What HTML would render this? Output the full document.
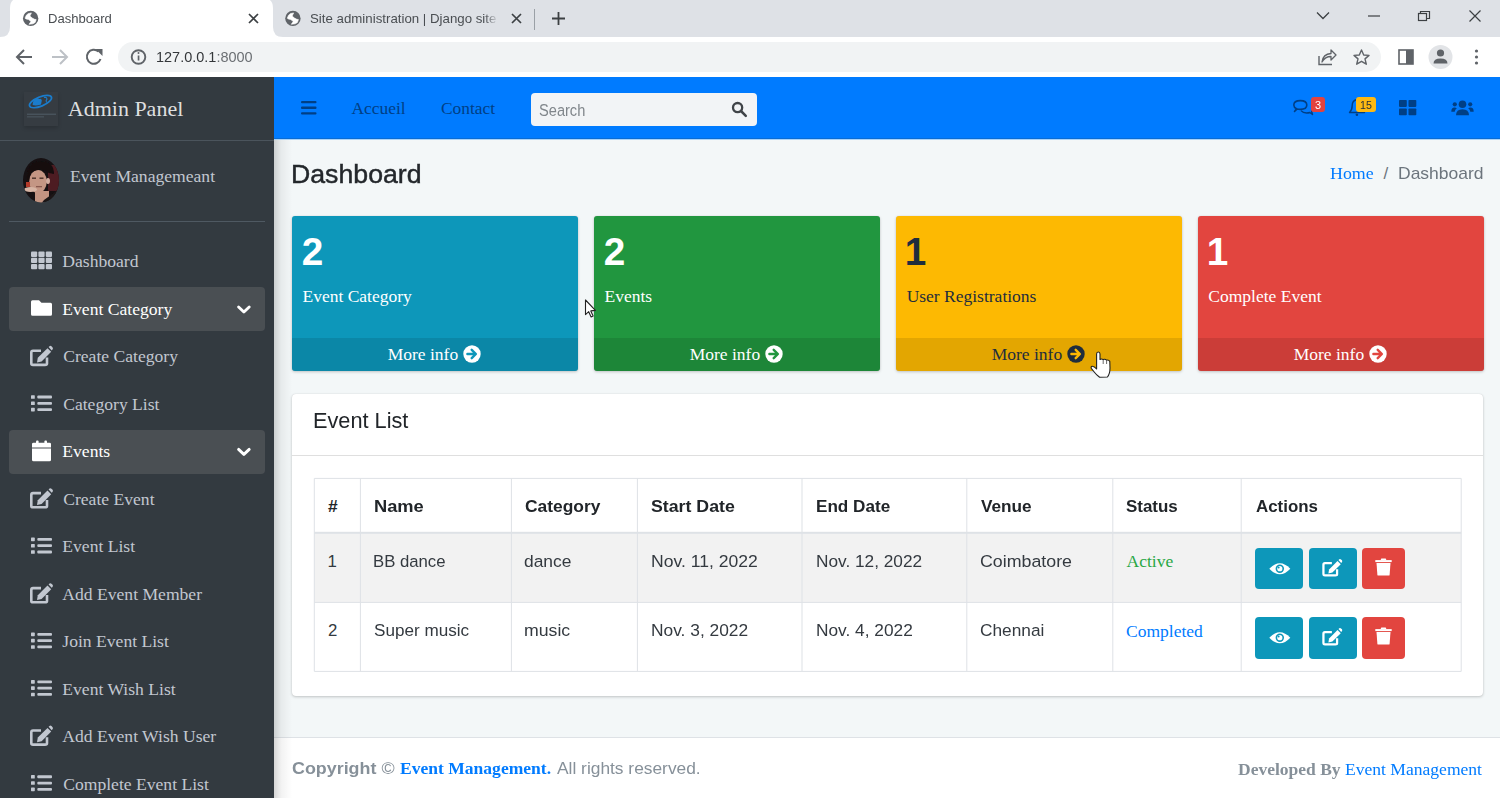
<!DOCTYPE html>
<html><head><meta charset="utf-8">
<style>
*{box-sizing:border-box;margin:0;padding:0}
html,body{width:1500px;height:798px;overflow:hidden;background:#fff;font-family:'Liberation Sans',sans-serif}
.t{position:absolute;white-space:nowrap;line-height:1}
.r{position:absolute;display:block}
</style></head><body>
<div class="r" style="left:0px;top:0px;width:1500px;height:37px;background:#dee1e6"></div>
<div class="r" style="left:0px;top:37px;width:1500px;height:41px;background:#fff"></div>
<svg class="r" style="left:0px;top:0px;" width="300" height="37" viewBox="0 0 300 37"><path d="M0,37 Q10,37 10,27 L10,8 Q10,-2 20,-2 L263,-2 Q273,-2 273,8 L273,27 Q273,37 283,37 Z" fill="#fff"/></svg>
<svg class="r" style="left:0px;top:0px;" width="60" height="37" viewBox="0 0 60 37"><circle cx="30.65" cy="18.4" r="7.7" fill="#5f6368"/><path d="M25.00,18.20 L26.30,15.20 L28.30,13.60 L31.40,12.90 L29.90,16.10 L32.20,18.00 L34.60,19.30 L36.20,19.60 L35.20,22.40 L33.00,23.80 L29.00,24.30 L31.00,21.60 L28.60,19.60 L26.20,19.00Z" fill="#fff" stroke="#fff" stroke-width=".6" stroke-linejoin="round"/></svg>
<svg class="r" style="left:260px;top:0px;" width="60" height="37" viewBox="260 0 60 37"><circle cx="292.9" cy="18.4" r="7.7" fill="#5f6368"/><path d="M287.25,18.20 L288.55,15.20 L290.55,13.60 L293.65,12.90 L292.15,16.10 L294.45,18.00 L296.85,19.30 L298.45,19.60 L297.45,22.40 L295.25,23.80 L291.25,24.30 L293.25,21.60 L290.85,19.60 L288.45,19.00Z" fill="#fff" stroke="#fff" stroke-width=".6" stroke-linejoin="round"/></svg>
<div class="t" style="left:47.95px;top:11.85px;font-size:13.4px;font-family:'Liberation Sans',sans-serif;color:#4a4e52;transform:scaleX(0.9751);transform-origin:0 0;">Dashboard</div>
<div class="t" style="left:310.40px;top:11.65px;font-size:13.4px;font-family:'Liberation Sans',sans-serif;color:#4a4e52;transform:scaleX(0.9910);transform-origin:0 0;width:200px;height:20px;-webkit-mask-image:linear-gradient(90deg,#000 176px,transparent 190px)">Site administration | Django site a</div>
<svg class="r" style="left:0px;top:0px;" width="1500" height="37" viewBox="0 0 1500 37"><path d="M249.0,14.0 L258.0,23.0 M258.0,14.0 L249.0,23.0" stroke="#3c4043" stroke-width="1.7" fill="none"/><path d="M512.0,14.0 L521.0,23.0 M521.0,14.0 L512.0,23.0" stroke="#3c4043" stroke-width="1.7" fill="none"/><path d="M534.5,9 L534.5,30" stroke="#9aa0a6" stroke-width="1"/><path d="M552,18.5 L565,18.5 M558.5,12 L558.5,25" stroke="#3c4043" stroke-width="1.8"/><path d="M1317,12.5 L1323,18.5 L1329,12.5" stroke="#3c4043" stroke-width="1.3" fill="none"/><path d="M1368,16 L1380,16" stroke="#3c4043" stroke-width="1.2"/><rect x="1418.5" y="13.5" width="8" height="7" stroke="#3c4043" stroke-width="1.2" fill="none"/><path d="M1420.5,13.5 L1420.5,11.5 L1429.5,11.5 L1429.5,18.5 L1426.5,18.5" stroke="#3c4043" stroke-width="1.2" fill="none"/><path d="M1469.5,10.5 L1480.5,21.5 M1480.5,10.5 L1469.5,21.5" stroke="#3c4043" stroke-width="1.2" fill="none"/></svg>
<div class="r" style="left:118px;top:42px;width:1263px;height:30px;background:#f1f3f4;border-radius:15px"></div>
<svg class="r" style="left:0px;top:37px;" width="1500" height="41" viewBox="0 37 1500 41"><path d="M32,57 L17.5,57 M24,50 L17,57 L24,64" stroke="#5f6368" stroke-width="2" fill="none"/><path d="M52,57 L66.5,57 M60,50 L67,57 L60,64" stroke="#bdc1c6" stroke-width="2" fill="none"/><path d="M100.5,59 A7,7 0 1 1 98.5,51.5" stroke="#5f6368" stroke-width="2" fill="none"/><path d="M95.5,49 L102.5,49 L102.5,56 Z" fill="#5f6368"/><circle cx="138.5" cy="57" r="6.8" stroke="#5f6368" stroke-width="1.9" fill="none"/><rect x="137.7" y="55.5" width="1.7" height="5" fill="#5f6368"/><circle cx="138.5" cy="53" r="1" fill="#5f6368"/><path d="M1319,56 L1319,64.5 L1332,64.5" stroke="#5f6368" stroke-width="1.4" fill="none"/><path d="M1322,62 Q1323,54 1331,53.5 L1331,50 L1336,55 L1331,60 L1331,56.5 Q1325,56.5 1322,62 Z" stroke="#5f6368" stroke-width="1.3" fill="none" stroke-linejoin="round"/><path d="M1361.5,50 L1363.7,55 L1369,55.4 L1365,58.9 L1366.3,64.2 L1361.5,61.3 L1356.7,64.2 L1358,58.9 L1354,55.4 L1359.3,55 Z" stroke="#5f6368" stroke-width="1.4" fill="none" stroke-linejoin="round"/><rect x="1399" y="50" width="14" height="14" stroke="#5f6368" stroke-width="1.6" fill="none"/><rect x="1406" y="50" width="7" height="14" fill="#5f6368"/><circle cx="1440.5" cy="57" r="12" fill="#e2e4e7"/><circle cx="1440.5" cy="53" r="3.6" fill="#5f6368"/><path d="M1433.5,63.5 Q1433.5,58.5 1440.5,58.5 Q1447.5,58.5 1447.5,63.5 Z" fill="#5f6368"/><circle cx="1476.5" cy="51" r="1.6" fill="#5f6368"/><circle cx="1476.5" cy="57" r="1.6" fill="#5f6368"/><circle cx="1476.5" cy="63" r="1.6" fill="#5f6368"/></svg>
<div class="t" style="left:155.91px;top:50.44px;font-size:14.6px;font-family:'Liberation Sans',sans-serif;color:#34373a;transform:scaleX(0.9919);transform-origin:0 0;">127.0.0.1<span style="color:#6b6f73">:8000</span></div>
<div class="r" style="left:0px;top:77px;width:1500px;height:721px;background:#f3f7f8"></div>
<div class="r" style="left:274px;top:736.5px;width:1226px;height:62px;background:#fff;border-top:1px solid #dee2e6"></div>
<div class="r" style="left:274px;top:77px;width:18px;height:721px;background:linear-gradient(90deg,rgba(0,0,0,.16),rgba(0,0,0,.05) 40%,rgba(0,0,0,0))"></div>
<div class="r" style="left:274px;top:77px;width:1226px;height:62px;background:#007bff"></div>
<div class="r" style="left:274px;top:138px;width:1226px;height:1px;background:#0a6cd4"></div>
<div class="r" style="left:274px;top:139px;width:1226px;height:1px;background:#a8d2f8"></div>
<div class="r" style="left:0px;top:77px;width:274px;height:721px;background:#333a40"></div>
<div class="r" style="left:24px;top:92px;width:34px;height:34px;background:#363c42;box-shadow:0 2px 4px rgba(0,0,0,.18)"></div>
<svg class="r" style="left:18px;top:86px;" width="46" height="46" viewBox="18 86 46 46"><ellipse cx="40.5" cy="101.6" rx="11.8" ry="4.6" fill="none" stroke="#1a7ccc" stroke-width="1.7" transform="rotate(-22 40.5 101.6)"/><path d="M32.6,105 Q32.8,99.5 36,98.8 Q37.5,97.6 39.3,99 Q41.5,98.2 41.8,100.5 L41,104.5 Q36,106 32.6,105 Z" fill="#1a7ccc"/><path d="M44,97.5 Q46.5,96.8 47,99 Q45.5,100.5 46.5,102.5" stroke="#1a7ccc" stroke-width="1.1" fill="none"/><rect x="27" y="113.6" width="29" height="1.3" fill="#4b5660"/><rect x="27" y="116.3" width="17" height="1.1" fill="#4b5660"/></svg>
<div class="t" style="left:67.78px;top:98.18px;font-size:22px;font-family:'Liberation Serif',serif;color:rgba(255,255,255,.85);">Admin Panel</div>
<div class="r" style="left:0px;top:139.5px;width:274px;height:1px;background:#4b545c"></div>
<svg class="r" style="left:23.3px;top:158.3px;" width="36" height="44.4" viewBox="0 0 36 44.4"><defs><clipPath id="av"><ellipse cx="18" cy="22.2" rx="18" ry="22.2"/></clipPath><filter id="bl"><feGaussianBlur stdDeviation=".6"/></filter></defs><g clip-path="url(#av)"><rect width="36" height="44.4" fill="#161012"/><g filter="url(#bl)"><rect x="25" y="7" width="11" height="26" fill="#4d1b20"/><ellipse cx="15" cy="23.5" rx="8.8" ry="11.5" fill="#c49684"/><path d="M4,22 Q3,4 17,3 Q31,3 31,16 L26,15 Q19,9 9,14 Q6,18 6,24 Z" fill="#140e10"/><rect x="9" y="19.5" width="4" height="1.4" fill="#4a3028"/><rect x="16.5" y="19.5" width="4" height="1.4" fill="#4a3028"/><rect x="13" y="28" width="6" height="1.3" fill="#8a5a50"/><rect x="12" y="33" width="14" height="12" fill="#c39482"/><path d="M19,44.4 L36,44.4 L36,31 Q28,37 21,42 Z" fill="#1b1719"/><ellipse cx="7.5" cy="31.5" rx="6.5" ry="2.6" fill="#d6b4a4"/><ellipse cx="25" cy="23" rx="2" ry="3" fill="#d2ada0"/><rect x="3" y="24" width="4" height="5" fill="#b33a2a"/></g></g></svg>
<div class="t" style="left:69.97px;top:167.66px;font-size:17.6px;font-family:'Liberation Serif',serif;color:#c2c7d0;">Event Managemeant</div>
<div class="r" style="left:9px;top:221px;width:256px;height:1px;background:#4f5962"></div>
<div class="t" style="left:62.30px;top:253.36px;font-size:17.6px;font-family:'Liberation Serif',serif;color:#c2c7d0;">Dashboard</div>
<div class="r" style="left:9px;top:287px;width:256px;height:44px;background:#4a4f53;border-radius:4px"></div>
<div class="t" style="left:62.30px;top:300.83px;font-size:17.6px;font-family:'Liberation Serif',serif;color:#fff;">Event Category</div>
<div class="t" style="left:63.20px;top:348.30px;font-size:17.6px;font-family:'Liberation Serif',serif;color:#c2c7d0;">Create Category</div>
<div class="t" style="left:63.20px;top:395.77px;font-size:17.6px;font-family:'Liberation Serif',serif;color:#c2c7d0;">Category List</div>
<div class="r" style="left:9px;top:429.9px;width:256px;height:44px;background:#4a4f53;border-radius:4px"></div>
<div class="t" style="left:62.30px;top:443.24px;font-size:17.6px;font-family:'Liberation Serif',serif;color:#fff;">Events</div>
<div class="t" style="left:63.20px;top:490.71px;font-size:17.6px;font-family:'Liberation Serif',serif;color:#c2c7d0;">Create Event</div>
<div class="t" style="left:62.30px;top:538.18px;font-size:17.6px;font-family:'Liberation Serif',serif;color:#c2c7d0;">Event List</div>
<div class="t" style="left:62.30px;top:585.65px;font-size:17.6px;font-family:'Liberation Serif',serif;color:#c2c7d0;">Add Event Member</div>
<div class="t" style="left:62.30px;top:633.12px;font-size:17.6px;font-family:'Liberation Serif',serif;color:#c2c7d0;">Join Event List</div>
<div class="t" style="left:62.30px;top:680.59px;font-size:17.6px;font-family:'Liberation Serif',serif;color:#c2c7d0;">Event Wish List</div>
<div class="t" style="left:62.30px;top:728.06px;font-size:17.6px;font-family:'Liberation Serif',serif;color:#c2c7d0;">Add Event Wish User</div>
<div class="t" style="left:63.20px;top:775.53px;font-size:17.6px;font-family:'Liberation Serif',serif;color:#c2c7d0;">Complete Event List</div>
<svg class="r" style="left:0px;top:77px;" width="274" height="721" viewBox="0 77 274 721"><rect x="31.0" y="251.60000000000002" width="6.2" height="5.3" rx="1" fill="#c2c7d0"/><rect x="31.0" y="257.8" width="6.2" height="5.3" rx="1" fill="#c2c7d0"/><rect x="31.0" y="264.0" width="6.2" height="5.3" rx="1" fill="#c2c7d0"/><rect x="38.4" y="251.60000000000002" width="6.2" height="5.3" rx="1" fill="#c2c7d0"/><rect x="38.4" y="257.8" width="6.2" height="5.3" rx="1" fill="#c2c7d0"/><rect x="38.4" y="264.0" width="6.2" height="5.3" rx="1" fill="#c2c7d0"/><rect x="45.8" y="251.60000000000002" width="6.2" height="5.3" rx="1" fill="#c2c7d0"/><rect x="45.8" y="257.8" width="6.2" height="5.3" rx="1" fill="#c2c7d0"/><rect x="45.8" y="264.0" width="6.2" height="5.3" rx="1" fill="#c2c7d0"/><path d="M238.6,306.97 L243.9,311.97 L249.2,306.97" stroke="#fff" stroke-width="2.9" fill="none" stroke-linecap="round" stroke-linejoin="round"/><path d="M31,301.6700000000001 Q31,300.1700000000001 32.5,300.1700000000001 L39,300.1700000000001 L41.5,302.6700000000001 L50.5,302.6700000000001 Q52,302.6700000000001 52,304.1700000000001 L52,314.1700000000001 Q52,315.6700000000001 50.5,315.6700000000001 L32.5,315.6700000000001 Q31,315.6700000000001 31,314.1700000000001 Z" fill="#fff"/><path d="M41,350.74 L33,350.74 Q31.3,350.74 31.3,352.54 L31.3,363.54 Q31.3,364.84000000000003 33,364.84000000000003 L45,364.84000000000003 Q47,364.84000000000003 47,363.54 L47,357.54" stroke="#c2c7d0" stroke-width="2.6" fill="none"/><path d="M37,362.54 L37.8,357.84000000000003 L47.5,348.14000000000004 L51.2,351.84000000000003 L41.6,361.54 Z" fill="#c2c7d0"/><path d="M48.6,347.04 L49.5,346.14000000000004 Q50.5,345.34000000000003 51.5,346.34000000000003 L52.6,347.44 Q53.4,348.54 52.5,349.54 L51.7,350.44 Z" fill="#c2c7d0"/><rect x="31" y="395.21" width="3.8" height="3.6" rx=".6" fill="#c2c7d0"/><rect x="37.3" y="395.60999999999996" width="14.7" height="2.8" rx="1" fill="#c2c7d0"/><rect x="31" y="401.51" width="3.8" height="3.6" rx=".6" fill="#c2c7d0"/><rect x="37.3" y="401.90999999999997" width="14.7" height="2.8" rx="1" fill="#c2c7d0"/><rect x="31" y="407.81" width="3.8" height="3.6" rx=".6" fill="#c2c7d0"/><rect x="37.3" y="408.21" width="14.7" height="2.8" rx="1" fill="#c2c7d0"/><path d="M238.6,449.38 L243.9,454.38 L249.2,449.38" stroke="#fff" stroke-width="2.9" fill="none" stroke-linecap="round" stroke-linejoin="round"/><path d="M32,443.98 Q32,442.68 33.5,442.68 L49.5,442.68 Q51,442.68 51,443.98 L51,447.48 L32,447.48 Z" fill="#fff"/><rect x="36" y="440.48" width="2.6" height="4" rx="1" fill="#fff"/><rect x="44.4" y="440.48" width="2.6" height="4" rx="1" fill="#fff"/><path d="M32,448.48 L51,448.48 L51,459.78000000000003 Q51,461.28000000000003 49.5,461.28000000000003 L33.5,461.28000000000003 Q32,461.28000000000003 32,459.78000000000003 Z" fill="#fff"/><path d="M41,493.15000000000003 L33,493.15000000000003 Q31.3,493.15000000000003 31.3,494.95000000000005 L31.3,505.95000000000005 Q31.3,507.25000000000006 33,507.25000000000006 L45,507.25000000000006 Q47,507.25000000000006 47,505.95000000000005 L47,499.95000000000005" stroke="#c2c7d0" stroke-width="2.6" fill="none"/><path d="M37,504.95000000000005 L37.8,500.25000000000006 L47.5,490.55000000000007 L51.2,494.25000000000006 L41.6,503.95000000000005 Z" fill="#c2c7d0"/><path d="M48.6,489.45000000000005 L49.5,488.55000000000007 Q50.5,487.75000000000006 51.5,488.75000000000006 L52.6,489.85 Q53.4,490.95000000000005 52.5,491.95000000000005 L51.7,492.85 Z" fill="#c2c7d0"/><rect x="31" y="537.6200000000001" width="3.8" height="3.6" rx=".6" fill="#c2c7d0"/><rect x="37.3" y="538.0200000000001" width="14.7" height="2.8" rx="1" fill="#c2c7d0"/><rect x="31" y="543.9200000000001" width="3.8" height="3.6" rx=".6" fill="#c2c7d0"/><rect x="37.3" y="544.32" width="14.7" height="2.8" rx="1" fill="#c2c7d0"/><rect x="31" y="550.2200000000001" width="3.8" height="3.6" rx=".6" fill="#c2c7d0"/><rect x="37.3" y="550.6200000000001" width="14.7" height="2.8" rx="1" fill="#c2c7d0"/><path d="M41,588.09 L33,588.09 Q31.3,588.09 31.3,589.89 L31.3,600.89 Q31.3,602.1899999999999 33,602.1899999999999 L45,602.1899999999999 Q47,602.1899999999999 47,600.89 L47,594.89" stroke="#c2c7d0" stroke-width="2.6" fill="none"/><path d="M37,599.89 L37.8,595.1899999999999 L47.5,585.49 L51.2,589.1899999999999 L41.6,598.89 Z" fill="#c2c7d0"/><path d="M48.6,584.39 L49.5,583.49 Q50.5,582.6899999999999 51.5,583.6899999999999 L52.6,584.79 Q53.4,585.89 52.5,586.89 L51.7,587.79 Z" fill="#c2c7d0"/><rect x="31" y="632.5600000000001" width="3.8" height="3.6" rx=".6" fill="#c2c7d0"/><rect x="37.3" y="632.96" width="14.7" height="2.8" rx="1" fill="#c2c7d0"/><rect x="31" y="638.86" width="3.8" height="3.6" rx=".6" fill="#c2c7d0"/><rect x="37.3" y="639.26" width="14.7" height="2.8" rx="1" fill="#c2c7d0"/><rect x="31" y="645.1600000000001" width="3.8" height="3.6" rx=".6" fill="#c2c7d0"/><rect x="37.3" y="645.5600000000001" width="14.7" height="2.8" rx="1" fill="#c2c7d0"/><rect x="31" y="680.0300000000001" width="3.8" height="3.6" rx=".6" fill="#c2c7d0"/><rect x="37.3" y="680.4300000000001" width="14.7" height="2.8" rx="1" fill="#c2c7d0"/><rect x="31" y="686.33" width="3.8" height="3.6" rx=".6" fill="#c2c7d0"/><rect x="37.3" y="686.73" width="14.7" height="2.8" rx="1" fill="#c2c7d0"/><rect x="31" y="692.6300000000001" width="3.8" height="3.6" rx=".6" fill="#c2c7d0"/><rect x="37.3" y="693.0300000000001" width="14.7" height="2.8" rx="1" fill="#c2c7d0"/><path d="M41,730.5 L33,730.5 Q31.3,730.5 31.3,732.3 L31.3,743.3 Q31.3,744.5999999999999 33,744.5999999999999 L45,744.5999999999999 Q47,744.5999999999999 47,743.3 L47,737.3" stroke="#c2c7d0" stroke-width="2.6" fill="none"/><path d="M37,742.3 L37.8,737.5999999999999 L47.5,727.9 L51.2,731.5999999999999 L41.6,741.3 Z" fill="#c2c7d0"/><path d="M48.6,726.8 L49.5,725.9 Q50.5,725.0999999999999 51.5,726.0999999999999 L52.6,727.1999999999999 Q53.4,728.3 52.5,729.3 L51.7,730.1999999999999 Z" fill="#c2c7d0"/><rect x="31" y="774.97" width="3.8" height="3.6" rx=".6" fill="#c2c7d0"/><rect x="37.3" y="775.37" width="14.7" height="2.8" rx="1" fill="#c2c7d0"/><rect x="31" y="781.27" width="3.8" height="3.6" rx=".6" fill="#c2c7d0"/><rect x="37.3" y="781.67" width="14.7" height="2.8" rx="1" fill="#c2c7d0"/><rect x="31" y="787.57" width="3.8" height="3.6" rx=".6" fill="#c2c7d0"/><rect x="37.3" y="787.97" width="14.7" height="2.8" rx="1" fill="#c2c7d0"/></svg>
<svg class="r" style="left:274px;top:77px;" width="1226" height="62" viewBox="274 77 1226 62"><rect x="301" y="101" width="15.5" height="2.3" rx="1" fill="#003f85"/><rect x="301" y="106.6" width="15.5" height="2.3" rx="1" fill="#003f85"/><rect x="301" y="112.3" width="15.5" height="2.3" rx="1" fill="#003f85"/><path d="M1294.5,111.5 L1296.5,108.8 Q1293.8,107.3 1293.8,105 Q1293.8,100.6 1300.3,100.6 Q1306.8,100.6 1306.8,105 Q1306.8,109.4 1300.3,109.4 Q1298.5,109.4 1297.2,109 Z" stroke="#003f85" stroke-width="1.6" fill="none" stroke-linejoin="round"/><path d="M1301,110.6 Q1303,113 1306.5,113 Q1308.5,113 1309.8,112.5 L1312.5,114.5 L1311.6,111.3 Q1313,109.8 1312.6,107" stroke="#003f85" stroke-width="1.4" fill="none" stroke-linejoin="round"/><path d="M1349.5,112.5 L1364.5,112.5 Q1361.8,110 1361.8,105.5 Q1361.8,100.5 1357,99.5 Q1352.2,100.5 1352.2,105.5 Q1352.2,110 1349.5,112.5 Z" stroke="#003f85" stroke-width="1.4" fill="none" stroke-linejoin="round"/><circle cx="1356.9" cy="114.8" r="1.3" fill="#003f85"/><rect x="1399" y="100" width="7.8" height="6.9" rx=".8" fill="#003f85"/><rect x="1408.5" y="100" width="7.8" height="6.9" rx=".8" fill="#003f85"/><rect x="1399" y="108.4" width="7.8" height="6.9" rx=".8" fill="#003f85"/><rect x="1408.5" y="108.4" width="7.8" height="6.9" rx=".8" fill="#003f85"/><circle cx="1462.5" cy="104.3" r="3.8" fill="#003f85"/><path d="M1456,115.3 Q1456,109.2 1462.5,109.2 Q1469,109.2 1469,115.3 Z" fill="#003f85"/><circle cx="1454.8" cy="104.3" r="2.1" fill="#003f85"/><circle cx="1470.2" cy="104.3" r="2.1" fill="#003f85"/><path d="M1451.3,111.8 Q1451.3,107.6 1454.5,107.6 Q1456,107.6 1456.8,108.3 Q1455,109.6 1454.7,111.8 Z" fill="#003f85"/><path d="M1473.7,111.8 Q1473.7,107.6 1470.5,107.6 Q1469,107.6 1468.2,108.3 Q1470,109.6 1470.3,111.8 Z" fill="#003f85"/></svg>
<div class="t" style="left:351.53px;top:99.63px;font-size:17.4px;font-family:'Liberation Serif',serif;color:#003f85;">Accueil</div>
<div class="t" style="left:441.00px;top:99.63px;font-size:17.4px;font-family:'Liberation Serif',serif;color:#003f85;">Contact</div>
<div class="r" style="left:531.3px;top:92.5px;width:225.4px;height:33.8px;background:#f2f4f6;border-radius:4px"></div>
<div class="t" style="left:539.34px;top:101.70px;font-size:16.3px;font-family:'Liberation Sans',sans-serif;color:#80868b;transform:scaleX(0.8977);transform-origin:0 0;">Search</div>
<svg class="r" style="left:725px;top:95px;" width="30" height="30" viewBox="725 95 30 30"><circle cx="737.6" cy="107.6" r="4.6" stroke="#404448" stroke-width="2.3" fill="none"/><path d="M741,111 L745.8,115.8" stroke="#404448" stroke-width="2.5" stroke-linecap="round"/></svg>
<div class="r" style="left:1311.3px;top:97px;width:14px;height:14.7px;background:#e2433f;border-radius:3px"></div>
<div class="t" style="left:1315.16px;top:99.51px;font-size:10.5px;font-family:'Liberation Sans',sans-serif;color:#fff;transform:scaleX(1.0426);transform-origin:0 0;">3</div>
<div class="r" style="left:1356px;top:96.7px;width:20px;height:15.3px;background:#fdb913;border-radius:3px"></div>
<div class="t" style="left:1359.80px;top:99.51px;font-size:10.5px;font-family:'Liberation Sans',sans-serif;color:#1f2d3d;transform:scaleX(1.0146);transform-origin:0 0;">15</div>
<div class="t" style="left:291.07px;top:161.09px;font-size:26px;font-family:'Liberation Sans',sans-serif;color:#23272b;transform:scaleX(1.0262);transform-origin:0 0;-webkit-text-stroke:.45px #23272b">Dashboard</div>
<div class="t" style="left:1330.46px;top:165.43px;font-size:17.4px;font-family:'Liberation Serif',serif;color:#007bff;transform:scaleX(1.0287);transform-origin:0 0;">Home</div>
<div class="t" style="left:1383.50px;top:164.61px;font-size:17px;font-family:'Liberation Sans',sans-serif;color:#6c757d;">/</div>
<div class="t" style="left:1397.60px;top:164.61px;font-size:17px;font-family:'Liberation Sans',sans-serif;color:#6c757d;transform:scaleX(1.0289);transform-origin:0 0;">Dashboard</div>
<div class="r" style="left:292px;top:215.5px;width:285.5px;height:155.5px;background:#0d97ba;border-radius:3px;box-shadow:0 0 1px rgba(0,0,0,.125),0 1px 3px rgba(0,0,0,.2);overflow:hidden"></div>
<div class="r" style="left:292px;top:338.3px;width:285.5px;height:32.7px;background:rgba(0,0,0,.1);border-radius:0 0 3px 3px"></div>
<div class="t" style="left:301.65px;top:233.23px;font-size:38.7px;font-family:'Liberation Sans',sans-serif;color:#fff;font-weight:bold;">2</div>
<div class="t" style="left:302.48px;top:288.45px;font-size:17.5px;font-family:'Liberation Serif',serif;color:#fff;">Event Category</div>
<div class="t" style="left:387.68px;top:345.55px;font-size:17.5px;font-family:'Liberation Serif',serif;color:#fff;">More info</div>
<svg class="r" style="left:463.2px;top:345px;" width="18" height="18" viewBox="463.2 345 18 18"><circle cx="472.2" cy="354" r="8.7" fill="#fff"/><path d="M467.59999999999997,354 L475.8,354 M471.9,349.8 L476.09999999999997,354 L471.9,358.2" stroke="#0d97ba" stroke-width="2.4" fill="none" stroke-linecap="round" stroke-linejoin="round"/></svg>
<div class="r" style="left:594px;top:215.5px;width:285.5px;height:155.5px;background:#21963f;border-radius:3px;box-shadow:0 0 1px rgba(0,0,0,.125),0 1px 3px rgba(0,0,0,.2);overflow:hidden"></div>
<div class="r" style="left:594px;top:338.3px;width:285.5px;height:32.7px;background:rgba(0,0,0,.1);border-radius:0 0 3px 3px"></div>
<div class="t" style="left:603.65px;top:233.23px;font-size:38.7px;font-family:'Liberation Sans',sans-serif;color:#fff;font-weight:bold;">2</div>
<div class="t" style="left:604.48px;top:288.45px;font-size:17.5px;font-family:'Liberation Serif',serif;color:#fff;">Events</div>
<div class="t" style="left:689.68px;top:345.55px;font-size:17.5px;font-family:'Liberation Serif',serif;color:#fff;">More info</div>
<svg class="r" style="left:765.2px;top:345px;" width="18" height="18" viewBox="765.2 345 18 18"><circle cx="774.2" cy="354" r="8.7" fill="#fff"/><path d="M769.6,354 L777.8000000000001,354 M773.9000000000001,349.8 L778.1,354 L773.9000000000001,358.2" stroke="#21963f" stroke-width="2.4" fill="none" stroke-linecap="round" stroke-linejoin="round"/></svg>
<div class="r" style="left:896px;top:215.5px;width:285.5px;height:155.5px;background:#fdb902;border-radius:3px;box-shadow:0 0 1px rgba(0,0,0,.125),0 1px 3px rgba(0,0,0,.2);overflow:hidden"></div>
<div class="r" style="left:896px;top:338.3px;width:285.5px;height:32.7px;background:rgba(0,0,0,.1);border-radius:0 0 3px 3px"></div>
<div class="t" style="left:904.68px;top:233.23px;font-size:38.7px;font-family:'Liberation Sans',sans-serif;color:#1f2d3d;font-weight:bold;">1</div>
<div class="t" style="left:906.65px;top:288.45px;font-size:17.5px;font-family:'Liberation Serif',serif;color:#1f2d3d;">User Registrations</div>
<div class="t" style="left:991.68px;top:345.55px;font-size:17.5px;font-family:'Liberation Serif',serif;color:#1f2d3d;">More info</div>
<svg class="r" style="left:1067.2px;top:345px;" width="18" height="18" viewBox="1067.2 345 18 18"><circle cx="1076.2" cy="354" r="8.7" fill="#1f2d3d"/><path d="M1071.6000000000001,354 L1079.8,354 M1075.9,349.8 L1080.1000000000001,354 L1075.9,358.2" stroke="#fdb902" stroke-width="2.4" fill="none" stroke-linecap="round" stroke-linejoin="round"/></svg>
<div class="r" style="left:1198px;top:215.5px;width:285.5px;height:155.5px;background:#e2453f;border-radius:3px;box-shadow:0 0 1px rgba(0,0,0,.125),0 1px 3px rgba(0,0,0,.2);overflow:hidden"></div>
<div class="r" style="left:1198px;top:338.3px;width:285.5px;height:32.7px;background:rgba(0,0,0,.1);border-radius:0 0 3px 3px"></div>
<div class="t" style="left:1206.68px;top:233.23px;font-size:38.7px;font-family:'Liberation Sans',sans-serif;color:#fff;font-weight:bold;">1</div>
<div class="t" style="left:1208.30px;top:288.45px;font-size:17.5px;font-family:'Liberation Serif',serif;color:#fff;">Complete Event</div>
<div class="t" style="left:1293.67px;top:345.55px;font-size:17.5px;font-family:'Liberation Serif',serif;color:#fff;">More info</div>
<svg class="r" style="left:1369.2px;top:345px;" width="18" height="18" viewBox="1369.2 345 18 18"><circle cx="1378.2" cy="354" r="8.7" fill="#fff"/><path d="M1373.6000000000001,354 L1381.8,354 M1377.9,349.8 L1382.1000000000001,354 L1377.9,358.2" stroke="#e2453f" stroke-width="2.4" fill="none" stroke-linecap="round" stroke-linejoin="round"/></svg>
<div class="r" style="left:292px;top:393.5px;width:1191.3px;height:302.5px;background:#fff;border-radius:4px;box-shadow:0 0 1px rgba(0,0,0,.125),0 1px 3px rgba(0,0,0,.2)"></div>
<div class="r" style="left:292px;top:455px;width:1191.3px;height:1px;background:rgba(0,0,0,.125)"></div>
<div class="t" style="left:312.76px;top:410.77px;font-size:21.3px;font-family:'Liberation Sans',sans-serif;color:#212529;transform:scaleX(1.0197);transform-origin:0 0;">Event List</div>
<div class="r" style="left:314.3px;top:532.8px;width:1147px;height:69.6px;background:#f2f2f2"></div>
<svg class="r" style="left:300px;top:470px;" width="1180" height="210" viewBox="300 470 1180 210"><rect x="313.8" y="478.4" width="1" height="193.0" fill="#dee2e6"/><rect x="359.9" y="478.4" width="1" height="193.0" fill="#dee2e6"/><rect x="510.9" y="478.4" width="1" height="193.0" fill="#dee2e6"/><rect x="636.9" y="478.4" width="1" height="193.0" fill="#dee2e6"/><rect x="801.5" y="478.4" width="1" height="193.0" fill="#dee2e6"/><rect x="966.3" y="478.4" width="1" height="193.0" fill="#dee2e6"/><rect x="1112.3" y="478.4" width="1" height="193.0" fill="#dee2e6"/><rect x="1240.7" y="478.4" width="1" height="193.0" fill="#dee2e6"/><rect x="1460.7" y="478.4" width="1" height="193.0" fill="#dee2e6"/><rect x="314.3" y="477.9" width="1146.9" height="1" fill="#dee2e6"/><rect x="314.3" y="531.8" width="1146.9" height="2" fill="#dee2e6"/><rect x="314.3" y="601.9" width="1146.9" height="1" fill="#dee2e6"/><rect x="314.3" y="670.9" width="1146.9" height="1" fill="#dee2e6"/></svg>
<div class="t" style="left:327.94px;top:497.67px;font-size:17.4px;font-family:'Liberation Sans',sans-serif;color:#212529;font-weight:bold;">#</div>
<div class="t" style="left:374.01px;top:497.67px;font-size:17.4px;font-family:'Liberation Sans',sans-serif;color:#212529;font-weight:bold;transform:scaleX(1.0509);transform-origin:0 0;">Name</div>
<div class="t" style="left:524.60px;top:497.67px;font-size:17.4px;font-family:'Liberation Sans',sans-serif;color:#212529;font-weight:bold;transform:scaleX(1.0007);transform-origin:0 0;">Category</div>
<div class="t" style="left:651.47px;top:497.67px;font-size:17.4px;font-family:'Liberation Sans',sans-serif;color:#212529;font-weight:bold;transform:scaleX(1.0199);transform-origin:0 0;">Start Date</div>
<div class="t" style="left:815.69px;top:497.67px;font-size:17.4px;font-family:'Liberation Sans',sans-serif;color:#212529;font-weight:bold;transform:scaleX(0.9839);transform-origin:0 0;">End Date</div>
<div class="t" style="left:980.71px;top:497.67px;font-size:17.4px;font-family:'Liberation Sans',sans-serif;color:#212529;font-weight:bold;transform:scaleX(0.9892);transform-origin:0 0;">Venue</div>
<div class="t" style="left:1126.19px;top:497.67px;font-size:17.4px;font-family:'Liberation Sans',sans-serif;color:#212529;font-weight:bold;transform:scaleX(0.9742);transform-origin:0 0;">Status</div>
<div class="t" style="left:1255.58px;top:497.67px;font-size:17.4px;font-family:'Liberation Sans',sans-serif;color:#212529;font-weight:bold;transform:scaleX(0.9706);transform-origin:0 0;">Actions</div>
<div class="t" style="left:327.54px;top:553.78px;font-size:16.8px;font-family:'Liberation Sans',sans-serif;color:#343a40;">1</div>
<div class="t" style="left:373.46px;top:553.78px;font-size:16.8px;font-family:'Liberation Sans',sans-serif;color:#343a40;transform:scaleX(0.9968);transform-origin:0 0;">BB dance</div>
<div class="t" style="left:524.30px;top:553.78px;font-size:16.8px;font-family:'Liberation Sans',sans-serif;color:#343a40;transform:scaleX(1.0372);transform-origin:0 0;">dance</div>
<div class="t" style="left:650.99px;top:553.78px;font-size:16.8px;font-family:'Liberation Sans',sans-serif;color:#343a40;transform:scaleX(1.0473);transform-origin:0 0;">Nov. 11, 2022</div>
<div class="t" style="left:815.62px;top:553.78px;font-size:16.8px;font-family:'Liberation Sans',sans-serif;color:#343a40;transform:scaleX(1.0283);transform-origin:0 0;">Nov. 12, 2022</div>
<div class="t" style="left:979.71px;top:553.78px;font-size:16.8px;font-family:'Liberation Sans',sans-serif;color:#343a40;transform:scaleX(1.0603);transform-origin:0 0;">Coimbatore</div>
<div class="t" style="left:1126.53px;top:553.35px;font-size:17.5px;font-family:'Liberation Serif',serif;color:#28a745;">Active</div>
<div class="r" style="left:1255.1px;top:547.5px;width:48px;height:41.5px;background:#0d97ba;border-radius:4px"></div>
<div class="r" style="left:1309.2px;top:547.5px;width:47.7px;height:41.5px;background:#0d97ba;border-radius:4px"></div>
<div class="r" style="left:1362px;top:547.5px;width:43.2px;height:41.5px;background:#e2453f;border-radius:4px"></div>
<svg class="r" style="left:1250px;top:547.5px;" width="160" height="42" viewBox="1250 547.5 160 42"><path d="M1269.3,568.2 Q1279.8,557.2 1290.3,568.2 Q1279.8,579.2 1269.3,568.2 Z" fill="#fff"/><circle cx="1279.8" cy="568.2" r="4.2" fill="#0d97ba"/><circle cx="1279.8" cy="568.2" r="2.6" fill="#fff"/><circle cx="1278.6" cy="567.0" r="1" fill="#0d97ba"/><g transform="translate(1322.3 560.8) scale(0.87) translate(-30 -347.5)"><path d="M41,349.7 L33,349.7 Q31.3,349.7 31.3,351.5 L31.3,362.5 Q31.3,363.8 33,363.8 L45,363.8 Q47,363.8 47,362.5 L47,356.5" stroke="#fff" stroke-width="2.6" fill="none"/><path d="M37,361.5 L37.8,356.8 L47.5,347.1 L51.2,350.8 L41.6,360.5 Z" fill="#fff"/><path d="M48.6,346.0 L49.5,345.1 Q50.5,344.3 51.5,345.3 L52.6,346.4 Q53.4,347.5 52.5,348.5 L51.7,349.4 Z" fill="#fff"/></g><path d="M1375.3,559.6 L1391.7,559.6 L1391.7,561.6 L1375.3,561.6 Z" fill="#fff"/><path d="M1380.5,559.7 L1381.3,558.1 L1385.7,558.1 L1386.5,559.7 Z" fill="#fff"/><path d="M1376.5,562.6 L1390.5,562.6 L1389.6,574.4 Q1389.5,575.1 1388.6,575.1 L1378.4,575.1 Q1377.5,575.1 1377.4,574.4 Z" fill="#fff"/></svg>
<div class="t" style="left:327.96px;top:623.18px;font-size:16.8px;font-family:'Liberation Sans',sans-serif;color:#343a40;">2</div>
<div class="t" style="left:374.03px;top:623.18px;font-size:16.8px;font-family:'Liberation Sans',sans-serif;color:#343a40;transform:scaleX(1.0192);transform-origin:0 0;">Super music</div>
<div class="t" style="left:523.85px;top:623.18px;font-size:16.8px;font-family:'Liberation Sans',sans-serif;color:#343a40;transform:scaleX(1.0535);transform-origin:0 0;">music</div>
<div class="t" style="left:651.01px;top:623.18px;font-size:16.8px;font-family:'Liberation Sans',sans-serif;color:#343a40;transform:scaleX(1.0347);transform-origin:0 0;">Nov. 3, 2022</div>
<div class="t" style="left:815.62px;top:623.18px;font-size:16.8px;font-family:'Liberation Sans',sans-serif;color:#343a40;transform:scaleX(1.0304);transform-origin:0 0;">Nov. 4, 2022</div>
<div class="t" style="left:979.74px;top:623.18px;font-size:16.8px;font-family:'Liberation Sans',sans-serif;color:#343a40;transform:scaleX(1.0289);transform-origin:0 0;">Chennai</div>
<div class="t" style="left:1126.00px;top:622.75px;font-size:17.5px;font-family:'Liberation Serif',serif;color:#007bff;">Completed</div>
<div class="r" style="left:1255.1px;top:617px;width:48px;height:41.5px;background:#0d97ba;border-radius:4px"></div>
<div class="r" style="left:1309.2px;top:617px;width:47.7px;height:41.5px;background:#0d97ba;border-radius:4px"></div>
<div class="r" style="left:1362px;top:617px;width:43.2px;height:41.5px;background:#e2453f;border-radius:4px"></div>
<svg class="r" style="left:1250px;top:617px;" width="160" height="42" viewBox="1250 617 160 42"><path d="M1269.3,637.7 Q1279.8,626.7 1290.3,637.7 Q1279.8,648.7 1269.3,637.7 Z" fill="#fff"/><circle cx="1279.8" cy="637.7" r="4.2" fill="#0d97ba"/><circle cx="1279.8" cy="637.7" r="2.6" fill="#fff"/><circle cx="1278.6" cy="636.5" r="1" fill="#0d97ba"/><g transform="translate(1322.3 630.3) scale(0.87) translate(-30 -347.5)"><path d="M41,349.7 L33,349.7 Q31.3,349.7 31.3,351.5 L31.3,362.5 Q31.3,363.8 33,363.8 L45,363.8 Q47,363.8 47,362.5 L47,356.5" stroke="#fff" stroke-width="2.6" fill="none"/><path d="M37,361.5 L37.8,356.8 L47.5,347.1 L51.2,350.8 L41.6,360.5 Z" fill="#fff"/><path d="M48.6,346.0 L49.5,345.1 Q50.5,344.3 51.5,345.3 L52.6,346.4 Q53.4,347.5 52.5,348.5 L51.7,349.4 Z" fill="#fff"/></g><path d="M1375.3,629.1 L1391.7,629.1 L1391.7,631.1 L1375.3,631.1 Z" fill="#fff"/><path d="M1380.5,629.2 L1381.3,627.6 L1385.7,627.6 L1386.5,629.2 Z" fill="#fff"/><path d="M1376.5,632.1 L1390.5,632.1 L1389.6,643.9 Q1389.5,644.6 1388.6,644.6 L1378.4,644.6 Q1377.5,644.6 1377.4,643.9 Z" fill="#fff"/></svg>
<div class="t" style="left:291.98px;top:760.44px;font-size:17.2px;font-family:'Liberation Sans',sans-serif;color:#869099;font-weight:bold;transform:scaleX(1.0400);transform-origin:0 0;">Copyright <span style="font-weight:normal">&copy;</span></div>
<div class="t" style="left:400.04px;top:760.43px;font-size:17.4px;font-family:'Liberation Serif',serif;color:#007bff;font-weight:bold;transform:scaleX(1.0089);transform-origin:0 0;">Event Management.</div>
<div class="t" style="left:556.50px;top:760.44px;font-size:17.2px;font-family:'Liberation Sans',sans-serif;color:#869099;transform:scaleX(1.0095);transform-origin:0 0;">All rights reserved.</div>
<div class="t" style="left:1237.54px;top:760.83px;font-size:17.4px;font-family:'Liberation Serif',serif;color:#869099;font-weight:bold;transform:scaleX(1.0066);transform-origin:0 0;">Developed By</div>
<div class="t" style="left:1345.27px;top:760.83px;font-size:17.4px;font-family:'Liberation Serif',serif;color:#007bff;transform:scaleX(1.0095);transform-origin:0 0;">Event Management</div>
<svg class="r" style="left:580px;top:295px;" width="25" height="25" viewBox="580 295 25 25"><path d="M585.5,300 L585.5,314.6 L588.7,311.7 L591.1,316.9 L593.1,316 L590.8,310.9 L595.4,310.4 Z" fill="#fff" stroke="#222" stroke-width="1.1" stroke-linejoin="round"/></svg>
<svg class="r" style="left:1085px;top:347px;" width="30" height="35" viewBox="1085 347 30 35"><path d="M1096.6,354 Q1096.6,352 1098.3,352 Q1100,352 1100,354 L1100,359.4 Q1101.8,358.4 1103.2,359.6 Q1105,358.6 1106.6,360.2 Q1108.6,359.6 1109.8,361.4 L1110,368 Q1110,374 1107.4,377 L1099.6,377.3 Q1096.4,375 1093.8,371.5 L1091.3,368.3 Q1090.6,366.6 1092.2,366.3 Q1094.2,366.2 1096.6,369 Z" fill="#fff" stroke="#222" stroke-width="1.1" stroke-linejoin="round"/><path d="M1103.2,359.8 L1103.2,364 M1106.6,360.4 L1106.6,364" stroke="#444" stroke-width=".8"/></svg>
</body></html>
